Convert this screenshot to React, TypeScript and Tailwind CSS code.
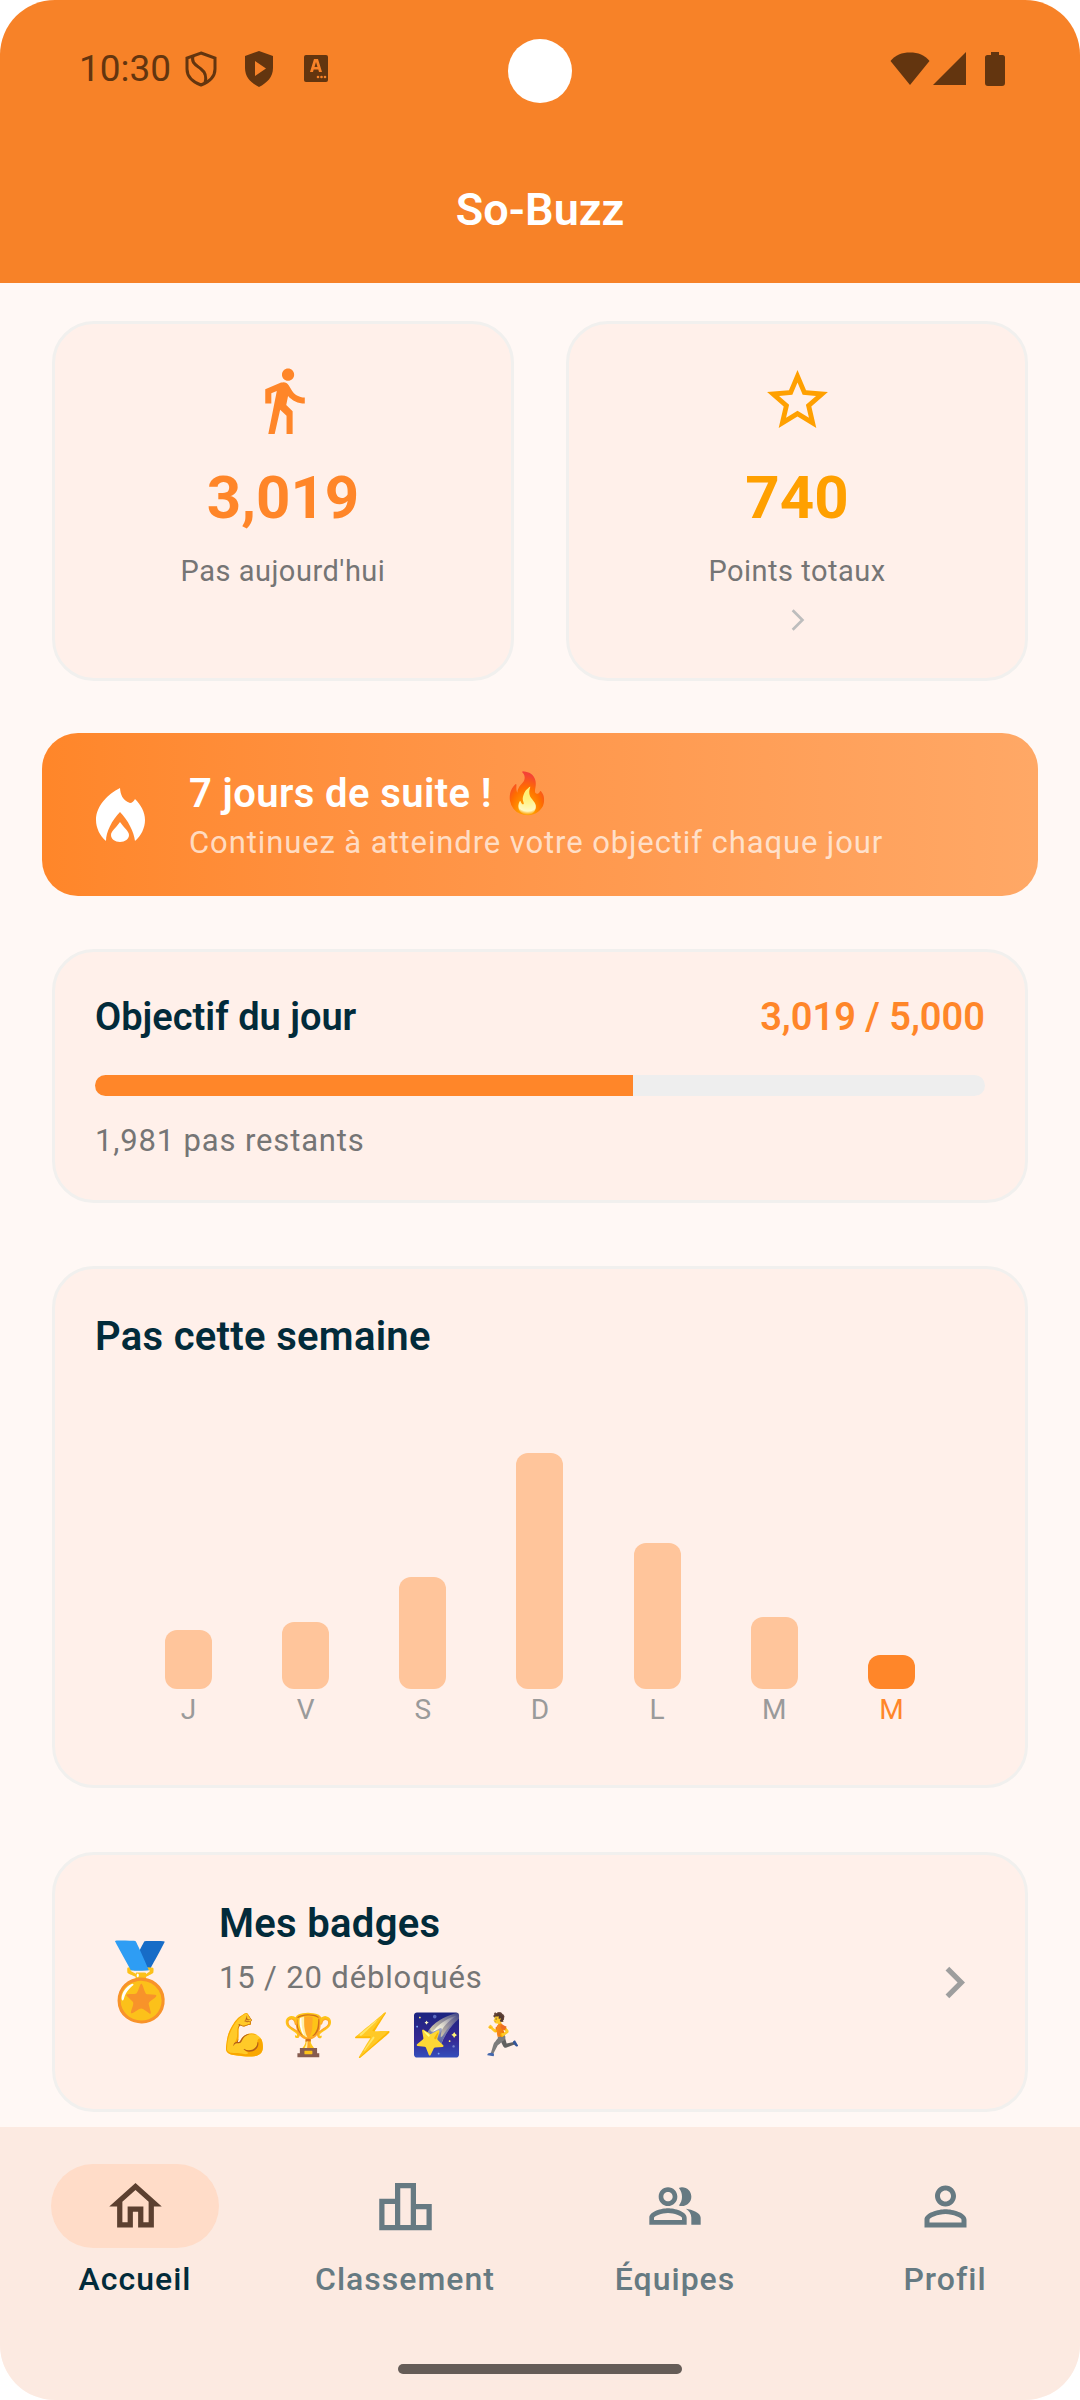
const roboto = { fontFamily: "Roboto, sans-serif" };

const bars = [
  { day: "J", height: 59 },
  { day: "V", height: 67 },
  { day: "S", height: 112 },
  { day: "D", height: 236 },
  { day: "L", height: 146 },
  { day: "M", height: 72 },
  { day: "M", height: 34, today: true },
];

const navItems = [
  {
    label: "Accueil",
    active: true,
    size: "h-[63px] w-[63px]",
    d: "M12 5.69l5 4.5V18h-2v-6H9v6H7v-7.81l5-4.5M12 3L2 12h3v8h6v-6h2v6h6v-8h3L12 3z",
  },
  {
    label: "Classement",
    size: "h-[63px] w-[63px]",
    d: "M16,11V3H8v6H2v12h20V11H16z M10,5h4v14h-4V5z M4,11h4v8H4V11z M20,19h-4v-6h4V19z",
  },
  {
    label: "Équipes",
    size: "h-[56px] w-[56px]",
    d: "M16.67 13.13C18.04 14.06 19 15.32 19 17v3h4v-3c0-2.18-3.57-3.47-6.33-3.87zM15 12c2.21 0 4-1.79 4-4s-1.79-4-4-4c-.47 0-.91.1-1.33.24C14.5 5.27 15 6.58 15 8s-.5 2.73-1.33 3.76c.42.14.86.24 1.33.24zM9 12c2.21 0 4-1.79 4-4s-1.79-4-4-4-4 1.79-4 4 1.79 4 4 4zm0-6c1.1 0 2 .9 2 2s-.9 2-2 2-2-.9-2-2 .9-2 2-2zM9 13c-2.67 0-8 1.34-8 4v3h16v-3c0-2.66-5.33-4-8-4zm6 5H3v-.99C3.2 16.29 6.3 15 9 15s5.8 1.29 6 2v1z",
  },
  {
    label: "Profil",
    size: "h-[63px] w-[63px]",
    d: "M12 5.9c1.16 0 2.1.94 2.1 2.1s-.94 2.1-2.1 2.1S9.9 9.16 9.9 8s.94-2.1 2.1-2.1m0 9c2.97 0 6.1 1.46 6.1 2.1v1.1H5.9V17c0-.64 3.13-2.1 6.1-2.1M12 4C9.79 4 8 5.79 8 8s1.79 4 4 4 4-1.79 4-4-1.79-4-4-4zm0 9c-2.67 0-8 1.34-8 4v3h16v-3c0-2.66-5.33-4-8-4z",
  },
];

function StatusBar() {
  return (
    <div className="relative flex h-[142px] items-start justify-between pl-[79px] pr-[75px] pt-[47px] text-[#63350f]">
      <div className="flex items-center">
        <span className="text-[37px] leading-[44px]">10:30</span>
        <svg viewBox="0 0 32 36" className="ml-[14px] h-[36px] w-[32px]" fill="none" stroke="currentColor" strokeWidth="3">
          <path d="M16 2l14 5v11c0 8-6 13-14 16C8 31 2 26 2 18V7z" />
          <path d="M8 5c-2 7 3 9 8 13 4 3 6 7 4 14" />
        </svg>
        <svg viewBox="0 0 30 36" className="ml-[27px] h-[36px] w-[30px]">
          <path fill="currentColor" fillRule="evenodd" d="M15 0l14 5v12c0 9-6 15-14 19C7 32 1 26 1 17V5zM11 10v15l11-7.500z" />
        </svg>
        <svg viewBox="0 0 24 28" className="ml-[30px] h-[28px] w-[24px]">
          <rect width="24" height="27" rx="2" fill="currentColor" />
          <path fill="#f78228" d="M10 4h4l4 13h-3l-.7-2.500H9.700L9 17H6zm2 3l-1.500 5h3z" />
          <circle cx="14" cy="22" r="1.300" fill="#f78228" />
          <circle cx="17.500" cy="22" r="1.300" fill="#f78228" />
          <circle cx="21" cy="22" r="1.300" fill="#f78228" />
        </svg>
      </div>
      <div className="absolute left-[508px] top-[39px] h-[64px] w-[64px] rounded-full bg-white" />
      <div className="flex items-start pt-[5px]">
        <svg viewBox="0 0 40 33" className="h-[33px] w-[40px]">
          <path fill="currentColor" d="M0.500 9C5 3 12 0.500 20 0.500S35 3 39.500 9L20 33z" />
        </svg>
        <svg viewBox="0 0 33 33" className="ml-[3px] h-[33px] w-[33px]">
          <path fill="currentColor" d="M33 0v33H0z" />
        </svg>
        <svg viewBox="0 0 20 34" className="ml-[19px] h-[34px] w-[20px]">
          <path fill="currentColor" d="M6 0h8v3h3.500q2.500 0 2.500 2.500V31q0 3-3 3H3q-3 0-3-3V5.500Q0 3 2.500 3H6z" />
        </svg>
      </div>
    </div>
  );
}

function BadgeEmojis() {
  return (
    <div className="mt-[12px] flex items-center gap-[13px] text-[41px] leading-[50px]">
      {["💪", "🏆", "⚡", "🌠", "🏃"].map((e) => (
        <span key={e}>{e}</span>
      ))}
    </div>
  );
}

export default function App() {
  return (
    <div className="h-[2400px] w-[1080px] bg-white" style={roboto}>
      <div className="flex h-full flex-col overflow-hidden rounded-[55px] bg-[#fff8f5]">
        <header className="h-[283px] bg-[#f78228]">
          <StatusBar />
          <h1 className="mt-[43px] text-center text-[45px] font-semibold leading-[50px] text-white">So-Buzz</h1>
        </header>

        <main className="flex-1 overflow-hidden">
          <section className="mx-[52px] mt-[38px] grid grid-cols-2 gap-[52px]">
            <div className="flex h-[360px] flex-col items-center rounded-[42px] border-[3px] border-[#f1f0ee] bg-[#fff0ea] pt-[40px]">
              <svg viewBox="0 0 24 24" className="h-[73px] w-[73px]" fill="#ff8629">
                <path d="M13.500 5.500c1.100 0 2-.9 2-2s-.9-2-2-2-2 .9-2 2 .9 2 2 2zM9.800 8.900L7 23h2.100l1.800-8 2.100 2v6h2v-7.500l-2.100-2 .6-3C14.800 12 16.800 13 19 13v-2c-1.900 0-3.500-1-4.300-2.400l-1-1.600c-.4-.6-1-1-1.700-1-.3 0-.5.1-.8.1L6 8.300V13h2V9.600l1.800-.7" />
              </svg>
              <div className="mt-[26px] text-[60px] font-bold leading-[70px] text-[#ff8629]">3,019</div>
              <div className="mt-[18px] text-[29px] leading-[40px] tracking-[0.5px] text-[#757575]">Pas aujourd'hui</div>
            </div>
            <div className="flex h-[360px] flex-col items-center rounded-[42px] border-[3px] border-[#f1f0ee] bg-[#fff0ea] pt-[40px]">
              <svg viewBox="0 0 24 24" className="h-[73px] w-[73px]" fill="#ffa000">
                <path d="M22 9.240l-7.190-.62L12 2 9.190 8.630 2 9.240l5.460 4.730L5.820 21 12 17.270 18.180 21l-1.630-7.030L22 9.240zM12 15.400l-3.760 2.270 1-4.280-3.320-2.880 4.380-.38L12 6.100l1.710 4.040 4.380.38-3.320 2.880 1 4.280L12 15.400z" />
              </svg>
              <div className="mt-[26px] text-[60px] font-bold leading-[70px] text-[#ffa000]">740</div>
              <div className="mt-[18px] text-[29px] leading-[40px] tracking-[0.5px] text-[#757575]">Points totaux</div>
              <svg viewBox="0 0 24 24" className="mt-[16px] h-[26px] w-[26px]" fill="none" stroke="#bdbdbd" strokeWidth="2.500">
                <path d="M8 3l9 9-9 9" />
              </svg>
            </div>
          </section>

          <section className="mx-[42px] mt-[52px] flex h-[163px] items-center rounded-[36px] bg-gradient-to-r from-[#ff8629] to-[#ffa866] pl-[54px]">
            <svg viewBox="0 0 50 54" className="h-[54px] w-[50px]" fill="white">
              <path d="M24 0C24.500 6 26 12 34 15C36 15 38 13 39 11C45 17 49 24 49 32C49 40 45 48 39 53C38 44 32 32 24 24C16 32 10 44 10 53C4 48 0 40 0 32C0 18 12 6 24 0Z" />
              <path d="M24 34C28 40 33 43 33 47C33 51 29 54 24 54C19 54 15 51 15 47C15 43 20 40 24 34Z" />
            </svg>
            <div className="ml-[43px] pt-[4px]">
              <div className="text-[40px] font-semibold leading-[48px] tracking-[0.4px] text-white">7 jours de suite ! 🔥</div>
              <div className="mt-[5px] text-[31px] leading-[40px] tracking-[0.9px] text-white/70">Continuez à atteindre votre objectif chaque jour</div>
            </div>
          </section>

          <section className="mx-[52px] mt-[53px] h-[254px] rounded-[42px] border-[3px] border-[#f1f0ee] bg-[#fff0ea] px-[40px] pt-[41px]">
            <div className="flex items-center justify-between">
              <span className="text-[38px] font-semibold leading-[48px] text-[#022b3a]">Objectif du jour</span>
              <span className="text-[38px] font-semibold leading-[48px] text-[#ff8629]">3,019 / 5,000</span>
            </div>
            <div className="mt-[34px] h-[21px] overflow-hidden rounded-full bg-[#eeeeee]">
              <div className="h-full bg-[#ff8629]" style={{ width: "60.4%" }} />
            </div>
            <div className="mt-[25px] text-[31px] leading-[40px] tracking-[0.85px] text-[#757575]">1,981 pas restants</div>
          </section>

          <section className="mx-[52px] mt-[63px] h-[522px] rounded-[42px] border-[3px] border-[#f1f0ee] bg-[#fff0ea] px-[40px] pt-[44px]">
            <div className="text-[40px] font-semibold leading-[48px] tracking-[0.3px] text-[#022b3a]">Pas cette semaine</div>
            <div className="mt-[92px] grid h-[236px] grid-cols-7 items-end px-[35px]">
              {bars.map((b, i) => (
                <div key={i} className="flex justify-center">
                  <div
                    className={`w-[47px] rounded-[12px] ${b.today ? "bg-[#ff8629]" : "bg-[#ffc59b]"}`}
                    style={{ height: b.height }}
                  />
                </div>
              ))}
            </div>
            <div className="mt-[5px] grid grid-cols-7 px-[35px]">
              {bars.map((b, i) => (
                <div key={i} className={`text-center text-[28px] leading-[32px] ${b.today ? "text-[#ff8629]" : "text-[#9a9a9a]"}`}>
                  {b.day}
                </div>
              ))}
            </div>
          </section>

          <section className="mx-[52px] mt-[64px] flex h-[260px] items-center rounded-[42px] border-[3px] border-[#f1f0ee] bg-[#fff0ea] pl-[40px] pr-[39px]">
            <span className="w-[124px] text-[74px] leading-none">🏅</span>
            <div className="flex-1">
              <div className="mt-[-3px] text-[40px] font-semibold leading-[46px] tracking-[0.3px] text-[#022b3a]">Mes badges</div>
              <div className="mt-[11px] text-[31px] leading-[40px] tracking-[0.85px] text-[#757575]">15 / 20 débloqués</div>
              <BadgeEmojis />
            </div>
            <svg viewBox="0 0 24 24" className="h-[63px] w-[63px]" fill="#9e9e9e">
              <path d="M10 6L8.590 7.410 13.170 12l-4.580 4.590L10 18l6-6z" />
            </svg>
          </section>
        </main>

        <nav className="relative h-[273px] bg-[#fceae1] pt-[37px]">
          <div className="grid grid-cols-4">
            {navItems.map((item) => (
              <div key={item.label} className="flex flex-col items-center">
                <div className={`flex h-[84px] w-[168px] items-center justify-center rounded-full ${item.active ? "bg-[#ffdcc8]" : ""}`}>
                  <svg viewBox="0 0 24 24" className={item.size} fill={item.active ? "#5c4030" : "#667a82"}>
                    <path d={item.d} />
                  </svg>
                </div>
                <span className={`mt-[11px] text-[32px] font-medium leading-[40px] tracking-[1px] ${item.active ? "text-[#022b3a]" : "text-[#667a82]"}`}>
                  {item.label}
                </span>
              </div>
            ))}
          </div>
          <div className="absolute bottom-[26px] left-[398px] h-[10px] w-[284px] rounded-full bg-[#655c57]" />
        </nav>
      </div>
    </div>
  );
}
